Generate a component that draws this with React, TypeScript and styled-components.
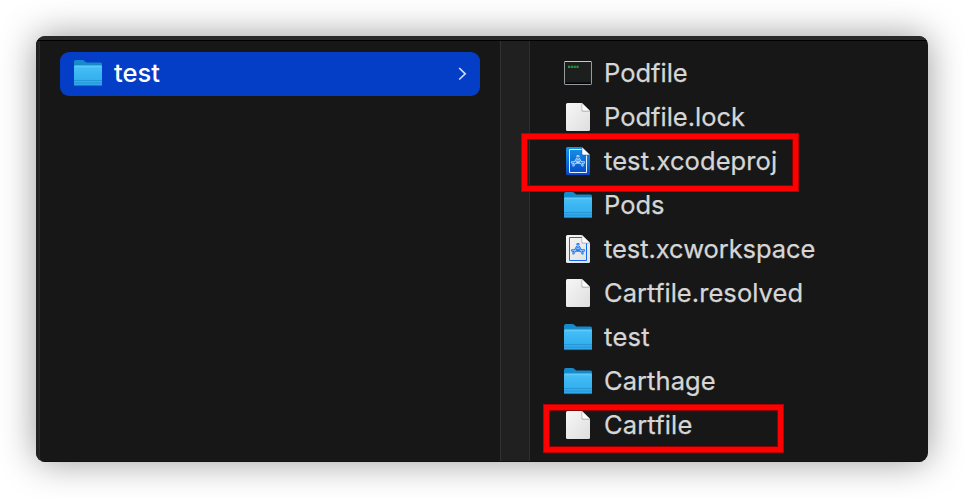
import React from "react";
import styled, { createGlobalStyle, css } from "styled-components";

const GlobalStyle = createGlobalStyle`
  body { margin: 0; background: #fff; overflow: hidden; }
  * { box-sizing: border-box; }
`;

const Desktop = styled.main`
  width: 964px;
  height: 498px;
  padding: 36px;
  background: #fff;
  font-family: Inter, "Liberation Sans", sans-serif;
`;

const FinderWindow = styled.section`
  position: relative;
  width: 892px;
  height: 426px;
  display: flex;
  flex-direction: column;
  overflow: hidden;
  border-radius: 9px;
  background: #171717;
`;

const WindowShadow = styled.div`
  width: 892px;
  height: 426px;
  border-radius: 9px;
  box-shadow: 0 0 36px rgba(0, 0, 0, 0.4);
`;

const TopEdge = styled.div`
  height: 5px;
  flex: none;
  background: #282a29;
  border-bottom: 1px solid #000;
`;

const Columns = styled.div`
  flex: 1;
  display: flex;
  border-bottom: 1px solid #120f12;
`;

const LeftEdge = styled.div`
  width: 4px;
  background: #1f2121;
  border-right: 1px solid #2b2b2b;
`;

const FolderColumn = styled.div`
  width: 460px;
  padding: 11px 20px;
`;

const Divider = styled.div`
  width: 30px;
  background: #202020;
  border-left: 1px solid #323232;
  border-right: 1px solid #2d2d2d;
`;

const FileColumn = styled.div`
  flex: 1;
  padding: 10px 0 0 34px;
`;

const Row = styled.div<{ $selected?: boolean }>`
  height: 44px;
  display: flex;
  align-items: center;
  gap: 12px;
  color: #d6d6d6;
  ${(p) =>
    p.$selected &&
    css`
      padding: 0 12px 2px 14px;
      border-radius: 9px;
      background: #053ec6;
      color: #fff;
    `}
`;

const Icon = styled.svg`
  width: 30px;
  height: 32px;
  margin-right: -2px;
  flex: none;
  display: block;
  overflow: visible;
`;

const Label = styled.span<{ $spacing: number; $medium?: boolean }>`
  flex: 1;
  font-size: 25.5px;
  line-height: 32px;
  white-space: nowrap;
  font-weight: ${(p) => (p.$medium ? 500 : 400)};
  letter-spacing: ${(p) => p.$spacing}px;
  -webkit-text-stroke: ${(p) => (p.$medium ? 0 : 0.25)}px currentColor;
`;

const Chevron = styled.svg`
  width: 10px;
  height: 16px;
  margin-top: -1px;
`;

const Highlight = styled.div<{ $x: number; $y: number; $w: number; $h: number }>`
  position: absolute;
  left: ${(p) => p.$x}px;
  top: ${(p) => p.$y}px;
  width: ${(p) => p.$w}px;
  height: ${(p) => p.$h}px;
  border: 5px solid #fe0000;
  box-shadow: 0 0 0 1px #b80000, inset 0 0 0 1px #8a0000;
`;

const FolderIcon = () => (
  <Icon viewBox="0 0 30 32">
    <defs>
      <linearGradient id="folderFront" x2="0" y2="1">
        <stop stopColor="#5ac8fa" />
        <stop offset="0.12" stopColor="#43bdf5" />
        <stop offset="1" stopColor="#2da7eb" />
      </linearGradient>
    </defs>
    <path d="M0 5.2Q0 3 1.8 3H8.3Q9.5 3 10.5 4L12.3 5.6H26.5Q28 5.6 28 7.2V20H0Z" fill="#168aca" />
    <path d="M0 9.8Q0 8.8 1 8.8H27Q28 8.8 28 9.8V27.5Q28 29 26.5 29H1.5Q0 29 0 27.5Z" fill="url(#folderFront)" />
    <path d="M.5 9H27.5" stroke="#76d2fb" strokeWidth=".7" />
    <path d="M0 23.5H28M0 26H28" stroke="#208dcb" strokeWidth=".7" />
    <path d="M.7 28.6H27.3" stroke="#1474b6" />
  </Icon>
);

type PageKind = "plain" | "project" | "workspace";

const PageIcon = ({ kind }: { kind: PageKind }) => {
  const blue = kind === "project";
  const ink = blue ? "#b9dcff" : "#1976ed";
  return (
    <Icon viewBox="0 1 30 32">
      <defs>
        <linearGradient id="paper" x2="1" y2="1">
          <stop stopColor="#f7f7f7" />
          <stop offset="1" stopColor="#dedede" />
        </linearGradient>
        <linearGradient id="bluePaper" x2="0" y2="1">
          <stop stopColor="#1696e6" />
          <stop offset="1" stopColor="#0747ca" />
        </linearGradient>
      </defs>
      <path d="M3.5 3H18L26 11V29.5Q26 31 24.5 31H3.5Q2 31 2 29.5V4.5Q2 3 3.5 3Z" fill={blue ? "url(#bluePaper)" : "url(#paper)"} />
      {kind !== "plain" && (
        <>
          <path d="M18 5.5H5.5V28.5H22.5V10" fill="none" stroke={blue ? "#e4f2ff" : "#146aef"} strokeWidth="1" />
          <g fill="none" stroke={ink} strokeLinecap="round">
            <path d="M14.5 12.2L9.4 21.4M13.4 12.2L18.6 21.4M8 18.5H20" strokeWidth="2.3" />
            <path d="M14.3 12.9L9.5 21.3M13.6 12.9L18.5 21.3M8.2 18.5H12M16 18.5H19.8" stroke={blue ? "#1471dc" : "#b3d2fc"} strokeWidth=".7" />
          </g>
        </>
      )}
      <path d="M17.6 3L26 11.4H18.6Q17.6 11.4 17.6 10.4Z" fill={blue ? "#1260b8" : "#9b9b9b"} />
      <path d="M18.2 3.4L25.8 10.8H19.2Q18.2 10.8 18.2 9.8Z" fill="#fbfbfb" />
    </Icon>
  );
};

const TerminalIcon = () => (
  <Icon viewBox="0 0 30 32">
    <rect x=".5" y="4.5" width="27" height="23" rx=".6" fill="#1d1f1f" stroke="#949b9f" />
    <path d="M0.8 4.5H27.2" stroke="#c0cbd0" />
    <path d="M1.5 26.2H26.5" stroke="#000" strokeWidth="1.5" />
    <path d="M4 9.8H14.6" stroke="#2aa343" strokeWidth="2.2" strokeDasharray="2.1 .75" />
    <path d="M4 9.8H14.6" stroke="#166b2a" strokeWidth=".5" />
  </Icon>
);

type FileEntry = { name: string; kind: PageKind | "terminal" | "folder"; spacing: number };

const files: FileEntry[] = [
  { name: "Podfile", kind: "terminal", spacing: 0 },
  { name: "Podfile.lock", kind: "plain", spacing: 0 },
  { name: "test.xcodeproj", kind: "project", spacing: 0.08 },
  { name: "Pods", kind: "folder", spacing: 0 },
  { name: "test.xcworkspace", kind: "workspace", spacing: -0.06 },
  { name: "Cartfile.resolved", kind: "plain", spacing: 0.06 },
  { name: "test", kind: "folder", spacing: 0.3 },
  { name: "Carthage", kind: "folder", spacing: 0.06 },
  { name: "Cartfile", kind: "plain", spacing: 0.14 },
];

const FileIcon = ({ kind }: { kind: FileEntry["kind"] }) => {
  if (kind === "terminal") return <TerminalIcon />;
  if (kind === "folder") return <FolderIcon />;
  return <PageIcon kind={kind} />;
};

export default function App() {
  return (
    <>
      <GlobalStyle />
      <Desktop>
        <WindowShadow>
          <FinderWindow>
            <TopEdge />
            <Columns>
              <LeftEdge />
              <FolderColumn>
                <Row $selected>
                  <FolderIcon />
                  <Label $spacing={0} $medium>test</Label>
                  <Chevron viewBox="0 0 10 16">
                    <path d="M1.2 3L7.2 8.8L1.2 14.5" fill="none" stroke="#cbdcff" strokeWidth="1.7" />
                  </Chevron>
                </Row>
              </FolderColumn>
              <Divider />
              <FileColumn>
                {files.map((file) => (
                  <Row key={file.name}>
                    <FileIcon kind={file.kind} />
                    <Label $spacing={file.spacing}>{file.name}</Label>
                  </Row>
                ))}
              </FileColumn>
            </Columns>
            <Highlight $x={486} $y={98} $w={276} $h={57} />
            <Highlight $x={508} $y={369} $w={239} $h={47} />
          </FinderWindow>
        </WindowShadow>
      </Desktop>
    </>
  );
}
